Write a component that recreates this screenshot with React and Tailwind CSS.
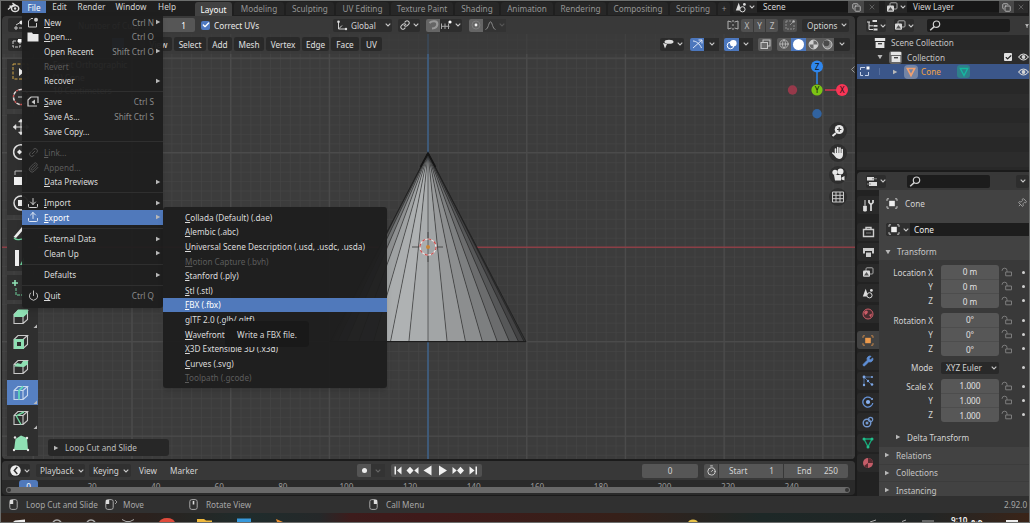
import React from "react";
import {
  Link2, Paperclip, Download, Upload, Power, Copy, X, Globe, Wrench,
  Pin, Timer, Check, Link,
} from "lucide-react";

const Chev = ({ c = "#c8c8c8" }) => (
  <svg width="6" height="4" viewBox="0 0 6 4" className="shrink-0">
    <path d="M0.7 0.7 L3 3 L5.3 0.7" fill="none" stroke={c} strokeWidth="1.1" />
  </svg>
);
const Tri = ({ down }) => (
  <svg width="6" height="6" viewBox="0 0 6 6" className="shrink-0">
    <path d={down ? "M0.5 1 H5.5 L3 5.3 Z" : "M1 0.7 L5.3 3 L1 5.3 Z"} fill="#b8b8b8" />
  </svg>
);

/* ---------- top bar ---------- */
const Logo = () => (
  <svg width="13" height="11" viewBox="0 0 13 11">
    <path d="M1 7.6 L6.8 2.4 M2.4 4.2 H7.5 M5.4 0.9 L9.6 4" stroke="#dedede" strokeWidth="1.3" fill="none" />
    <ellipse cx="8.1" cy="6.5" rx="3.6" ry="3.1" fill="none" stroke="#dedede" strokeWidth="1.5" />
    <circle cx="8.1" cy="6.5" r="1.2" fill="#dedede" />
  </svg>
);
const SceneIcon = () => (
  <svg width="12" height="11" viewBox="0 0 12 11">
    <path d="M3.7 0.8 L6.3 8.5 H0.8 Z" fill="#dcdcdc" />
    <circle cx="7.5" cy="7.3" r="2.6" fill="#2a2a2a" stroke="#dcdcdc" />
    <circle cx="9.4" cy="2.4" r="1.4" fill="#dcdcdc" />
  </svg>
);
const LayersIcon = () => (
  <svg width="12" height="11" viewBox="0 0 12 11">
    <rect x="4" y="0.8" width="7" height="6.2" rx="1" fill="none" stroke="#a8a8a8" />
    <rect x="1" y="3.4" width="7" height="6.4" rx="1" fill="#d8d8d8" />
    <path d="M2 8.6 L4.5 5 L7 8.6 Z" fill="#555" />
  </svg>
);
const Tab = ({ w, children }) => (
  <div className={`${w} flex h-[13px] shrink-0 items-center justify-center rounded-t-[3px] bg-[#272727] text-[#949494]`}>{children}</div>
);

const TopBar = () => (
  <div className="flex h-[15px] shrink-0 items-start bg-[#1f1f1f]">
    <div className="ml-[6px] mt-[1px] w-[15px] shrink-0"><Logo /></div>
    <div className="flex h-[12px] w-[24px] items-center justify-center bg-[#5079bb] text-white">File</div>
    <div className="flex h-[11px] w-[27px] items-center justify-center">Edit</div>
    <div className="flex h-[11px] w-[37px] items-center justify-center">Render</div>
    <div className="flex h-[11px] w-[42px] items-center justify-center">Window</div>
    <div className="flex h-[11px] w-[30px] items-center justify-center">Help</div>
    <div className="ml-[13px] mt-[1px] flex shrink-0 gap-[2px]">
      <div className="flex h-[14px] w-[37px] items-center justify-center rounded-t-[3px] bg-[#424242] text-white">Layout</div>
      <Tab w="w-[50px]">Modeling</Tab>
      <Tab w="w-[48px]">Sculpting</Tab>
      <Tab w="w-[53px]">UV Editing</Tab>
      <Tab w="w-[62px]">Texture Paint</Tab>
      <Tab w="w-[44px]">Shading</Tab>
      <Tab w="w-[52px]">Animation</Tab>
      <Tab w="w-[51px]">Rendering</Tab>
      <Tab w="w-[60px]">Compositing</Tab>
      <Tab w="w-[46px]">Scripting</Tab>
      <Tab w="w-[12px]">+</Tab>
    </div>
    <div className="ml-[3px] flex h-[12px] w-[24px] shrink-0 items-center justify-center gap-[2px] rounded-bl-[3px] bg-[#272727]"><SceneIcon /><Chev /></div>
    <div className="flex h-[11px] w-[91px] shrink-0 items-center bg-[#171717] pl-[6px]">Scene</div>
    <div className="flex h-[12px] w-[16px] shrink-0 items-center justify-center bg-[#484848]"><Copy size={9} color="#d0d0d0" /></div>
    <div className="flex h-[12px] w-[15px] shrink-0 items-center justify-center bg-[#2b2b2b]"><X size={8} color="#777" /></div>
    <div className="ml-[6px] flex h-[12px] w-[22px] shrink-0 items-center justify-center gap-[2px] bg-[#272727]"><LayersIcon /><Chev /></div>
    <div className="flex h-[11px] w-[92px] shrink-0 items-center bg-[#171717] pl-[6px]">View Layer</div>
    <div className="flex h-[12px] w-[15px] shrink-0 items-center justify-center bg-[#484848]"><Copy size={9} color="#d0d0d0" /></div>
    <div className="flex h-[12px] w-[14px] shrink-0 items-center justify-center bg-[#2b2b2b]"><X size={8} color="#777" /></div>
  </div>
);

/* ---------- viewport ---------- */
const ToolHeader = () => (
  <div className="flex h-[18px] shrink-0 items-center rounded-t-[4px] bg-[#393939]">
    <div className="ml-[6px] flex h-[14px] w-[22px] items-center justify-center rounded-[2px] bg-[#2b2b2b]">
      <svg width="12" height="10" viewBox="0 0 12 10"><path d="M1 8 H5 M3 6 V10 M3 5 L8 2 M6 8 H9" stroke="#ccc" /><circle cx="8.5" cy="2.5" r="2" fill="#eee" /></svg>
    </div>
    <div className="ml-[48px] w-[60px] shrink-0 whitespace-nowrap">Number of Cuts</div>
    <div className="ml-[7px] flex h-[14px] w-[50px] shrink-0 items-center justify-end rounded-r-[2px] bg-[#565656] pr-[9px] text-white">1</div>
    <div className="ml-[6px] flex h-[9px] w-[9px] items-center justify-center rounded-[2px] bg-[#4e78c0]"><Check size={8} strokeWidth={4} color="#fff" /></div>
    <div className="ml-[4px] w-[119px] shrink-0 text-[#e8e8e8]">Correct UVs</div>
    <div className="flex h-[13px] w-[59px] shrink-0 items-center rounded-[2px] bg-[#2d2d2d] pl-[3px]">
      <svg width="12" height="11" viewBox="0 0 12 11"><path d="M2.5 1 V9 H10 M2.5 9 L6 5.5" stroke="#d0d0d0" fill="none" /><circle cx="2.5" cy="1.8" r="1.3" fill="#ddd" /><circle cx="10" cy="9" r="1.2" fill="#ddd" /></svg>
      <span className="ml-[3px] w-[34px]">Global</span><Chev />
    </div>
    <div className="ml-[6px] flex h-[13px] w-[22px] shrink-0 items-center justify-center gap-[3px] rounded-[2px] bg-[#2d2d2d]"><Link size={10} strokeWidth={2.6} color="#c8c8c8" /><Chev /></div>
    <div className="ml-[6px] flex h-[13px] w-[14px] shrink-0 items-center justify-center rounded-l-[2px] bg-[#656565]">
      <svg width="11" height="10" viewBox="0 0 11 10"><path d="M1.5 3 C4 0.5 9.5 0.5 9.3 4.2 C9.2 7.5 6 8.3 4 8.5" fill="none" stroke="#989898" strokeWidth="2.2" /></svg>
    </div>
    <div className="flex h-[13px] w-[22px] shrink-0 items-center justify-center gap-[3px] rounded-r-[2px] bg-[#2d2d2d]">
      <svg width="11" height="10" viewBox="0 0 11 10"><path d="M0.5 3.5 V9 M4 3.5 V9 M7.5 3.5 V9 M0 6.3 H8.5" stroke="#a8a8a8" fill="none" /><circle cx="9" cy="2" r="1.6" fill="#fff" /></svg><Chev />
    </div>
    <div className="ml-[7px] flex h-[13px] w-[14px] shrink-0 items-center justify-center rounded-l-[2px] bg-[#656565]">
      <svg width="10" height="10" viewBox="0 0 10 10"><circle cx="5" cy="5" r="4" fill="none" stroke="#7c7c7c" /><circle cx="5" cy="5" r="1.4" fill="#f2f2f2" /></svg>
    </div>
    <div className="flex h-[13px] w-[23px] shrink-0 items-center justify-center gap-[3px] bg-[#333]">
      <svg width="11" height="9" viewBox="0 0 11 9"><path d="M0.5 8.5 C3.5 8 3.7 0.8 5.5 0.8 S7.5 8 10.5 8.5" stroke="#8a8a8a" fill="none" /></svg><Chev c="#555" />
    </div>
    <div className="ml-[220px] flex h-[13px] w-[14px] shrink-0 items-center justify-center">
      <svg width="12" height="10" viewBox="0 0 12 10"><path d="M4.5 2 L1 1 V9 L4.5 8 M7.5 2 L11 1 V9 L7.5 8 M6 0 V2 M6 4 V6 M6 8 V10" stroke="#b0b0b0" fill="none" /></svg>
    </div>
    <div className="ml-px flex h-[13px] w-[37px] shrink-0 gap-px overflow-hidden rounded-[2px] text-[#bdbdbd]">
      <div className="flex flex-1 items-center justify-center bg-[#505050]">X</div>
      <div className="flex flex-1 items-center justify-center bg-[#505050]">Y</div>
      <div className="flex flex-1 items-center justify-center bg-[#505050]">Z</div>
    </div>
    <div className="ml-[5px] flex h-[13px] w-[14px] shrink-0 items-center justify-center rounded-[2px] bg-[#505050]">
      <svg width="10" height="10" viewBox="0 0 10 10"><path d="M1 1 H6 M1 1 V9 H9 V4" stroke="#8d8d8d" fill="none" strokeDasharray="2 1" /><path d="M5 5 L9 1" stroke="#8d8d8d" /><circle cx="8.6" cy="1.4" r="1.2" fill="#bbb" /></svg>
    </div>
    <div className="ml-[5px] flex h-[13px] w-[47px] shrink-0 items-center gap-[4px] rounded-[2px] bg-[#2d2d2d] pl-[5px]">Options<Chev /></div>
  </div>
);

const Pill = ({ w, children }) => (
  <div className={`${w} flex h-[14px] shrink-0 items-center justify-center rounded-[2px] bg-[#262626]/80 text-[#e0e0e0]`}>{children}</div>
);

const Header = () => (
  <div className="flex h-[20px] shrink-0 items-center bg-[#393939]/60">
    <div className="ml-[6px] flex h-[13px] w-[22px] shrink-0 items-center rounded-[2px] bg-[#2b2b2b] pl-[3px]">
      <svg width="11" height="10" viewBox="0 0 11 10"><path d="M2 2 H9 M2 2 V8 H9 V3" stroke="#ccc" fill="none" strokeDasharray="3 1" /><rect x="7" y="0" width="3.5" height="3.5" fill="#fff" /></svg>
    </div>
    <div className="ml-[82px] h-[12px] w-[12px] shrink-0 bg-[#4f79bc]" />
    <div className="ml-[21px] flex w-[237px] shrink-0 justify-between">
      <Pill w="w-[27px]">View</Pill>
      <Pill w="w-[32px]">Select</Pill>
      <Pill w="w-[24px]">Add</Pill>
      <Pill w="w-[30px]">Mesh</Pill>
      <Pill w="w-[34px]">Vertex</Pill>
      <Pill w="w-[27px]">Edge</Pill>
      <Pill w="w-[28px]">Face</Pill>
      <Pill w="w-[21px]">UV</Pill>
    </div>
    <div className="ml-[278px] flex h-[13px] w-[24px] shrink-0 items-center justify-center gap-[3px] rounded-[2px] bg-[#2b2b2b]">
      <svg width="12" height="10" viewBox="0 0 12 10"><ellipse cx="7" cy="2.8" rx="4.5" ry="2" fill="#ddd" /><path d="M1 4 L5 5 L3 9.5 Z" fill="#ddd" /></svg><Chev />
    </div>
    <div className="ml-[6px] flex h-[13px] w-[14px] shrink-0 items-center justify-center rounded-l-[2px] bg-[#4c77bd]">
      <svg width="11" height="10" viewBox="0 0 11 10"><path d="M1 9 L10 1 M6.5 1 H10 V4.5 M1 2 C4 2 8 5 9.5 9" stroke="#dfe8f8" fill="none" /></svg>
    </div>
    <div className="flex h-[13px] w-[15px] shrink-0 items-center justify-center bg-[#2b2b2b]"><Chev /></div>
    <div className="ml-[5px] flex h-[13px] w-[15px] shrink-0 items-center justify-center rounded-l-[2px] bg-[#4c77bd]">
      <svg width="12" height="11" viewBox="0 0 12 11"><circle cx="4.5" cy="6.5" r="3.3" fill="none" stroke="#fff" /><circle cx="7.3" cy="4.2" r="3.3" fill="#fff" /></svg>
    </div>
    <div className="flex h-[13px] w-[14px] shrink-0 items-center justify-center bg-[#2b2b2b]"><Chev /></div>
    <div className="ml-[5px] flex h-[13px] w-[14px] shrink-0 items-center justify-center rounded-[2px] bg-[#5a5a5a]">
      <svg width="11" height="11" viewBox="0 0 11 11"><rect x="3" y="1" width="7" height="6" fill="none" stroke="#c8c8c8" /><rect x="1" y="3.5" width="6.5" height="6" fill="#6c6c6c" stroke="#c8c8c8" /></svg>
    </div>
    <div className="ml-[5px] flex h-[13px] shrink-0 overflow-hidden rounded-[2px]">
      <div className="flex w-[14px] items-center justify-center bg-[#5a5a5a]"><Globe size={10} color="#bdbdbd" /></div>
      <div className="flex w-[15px] items-center justify-center bg-[#4c77bd]"><div className="h-[11px] w-[11px] rounded-full bg-white" /></div>
      <div className="flex w-[14px] items-center justify-center bg-[#5a5a5a]">
        <svg width="11" height="11" viewBox="0 0 11 11"><circle cx="5.5" cy="5.5" r="4.5" fill="#6a6a6a" stroke="#c6c6c6" /><path d="M5.5 1 A4.5 4.5 0 0 0 1 5.5 H5.5 Z M5.5 5.5 H10 A4.5 4.5 0 0 1 5.5 10 Z" fill="#d0d0d0" /></svg>
      </div>
      <div className="flex w-[14px] items-center justify-center bg-[#5a5a5a]">
        <svg width="11" height="11" viewBox="0 0 11 11"><circle cx="5.5" cy="5.5" r="4.5" fill="#888" stroke="#c6c6c6" /><circle cx="4.3" cy="4.2" r="3" fill="#4a4a4a" /></svg>
      </div>
      <div className="flex w-[16px] items-center justify-center bg-[#2b2b2b]"><Chev /></div>
    </div>
  </div>
);

const CX = 428, APEX = 153, BASE = 341.7, R = 98;
const shades = ["#3c3d3d", "#555656", "#727475", "#8e9091", "#9fa2a3", "#abaeaf", "#afb2b3", "#aaadae", "#a2a5a6", "#989a9b", "#8c8e8f", "#7d7f80", "#6b6c6d", "#565758", "#434344", "#333434"];
const rim = Array.from({ length: 17 }, (_, i) => CX + R * Math.sin(((i - 8) * 11.25 * Math.PI) / 180));

const Scene = () => (
  <svg className="absolute inset-0" width="853" height="425" viewBox="2 34 853 425">
    <defs>
      <pattern id="fine" x="428" y="247.2" width="9.87" height="9.44" patternUnits="userSpaceOnUse">
        <path d="M0 0 H9.87 M0 0 V9.44" stroke="#444444" strokeWidth="1.6" fill="none" />
      </pattern>
    </defs>
    <rect x="2" y="34" width="853" height="425" fill="#3c3c3c" />
    <rect x="2" y="34" width="853" height="425" fill="url(#fine)" />
    {[-4, -3, -2, -1, 1, 2, 3, 4].map((k) => (
      <path key={k} d={`M${428 + k * 98.7} 34 V459`} stroke="#4b4b4b" strokeWidth="1.3" />
    ))}
    {[-2, -1, 1, 2].map((k) => (
      <path key={k} d={`M2 ${247.2 + k * 94.5} H855`} stroke="#4b4b4b" strokeWidth="1.3" />
    ))}
    <path d="M2 247.2 H855" stroke="#8c3f46" strokeWidth="1.4" />
    <path d="M428 34 V459" stroke="#3f5f82" strokeWidth="1.7" />
    {shades.map((c, i) => (
      <path key={i} d={`M${CX} ${APEX} L${rim[i]} ${BASE} L${rim[i + 1]} ${BASE} Z`} fill={c} />
    ))}
    {rim.map((x, i) => (
      <path key={i} d={`M${CX} ${APEX} L${x} ${BASE}`} stroke="#1c1c1c" strokeOpacity={i === 0 || i === 16 ? 1 : 0.7} strokeWidth="0.75" />
    ))}
    <path d={`M${rim[0]} ${BASE} H${rim[16]}`} stroke="#1c1c1c" strokeWidth="1.2" />
    <path d="M420.5 167 L428 153 L435.5 167" fill="none" stroke="#161616" strokeWidth="1.6" />
    <path d="M412 247 H421 M435 247 H443 M428 232 V240 M428 254 V262" stroke="#444" strokeWidth="0.9" />
    <circle cx="428" cy="247" r="8" fill="none" stroke="#f0e6e6" strokeWidth="1.2" />
    <circle cx="428" cy="247" r="8" fill="none" stroke="#c9514f" strokeWidth="1.2" strokeDasharray="3.14 3.14" />
    <circle cx="428" cy="247" r="2" fill="#c88534" />
    <path d="M817 71 V84" stroke="#2f83e3" strokeWidth="1.6" />
    <path d="M825 90 H838" stroke="#d7344f" strokeWidth="1.6" />
    <circle cx="817" cy="66.5" r="6" fill="#2f87ee" />
    <circle cx="792.5" cy="90" r="4.7" fill="#96394a" />
    <circle cx="817" cy="113.7" r="4.7" fill="#3163a0" />
    <circle cx="817" cy="90" r="5.6" fill="#7cc414" />
    <circle cx="842" cy="90" r="6" fill="#f93556" />
    <path d="M854.5 66.5 L851.5 69.5 L854.5 72.5" fill="none" stroke="#999" />
    <g fontFamily="Noto Sans, sans-serif" fontSize="8" textAnchor="middle" fill="#111">
      <text x="817" y="69.5">Z</text><text x="817" y="93">Y</text><text x="842" y="93">X</text>
    </g>
  </svg>
);

const Cube = ({ kind, color = "#c9c9c9" }) => (
  <svg width="18" height="18" viewBox="0 0 18 18">
    <path d="M2 6.5 H11 V15.5 H2 Z M2 6.5 L6 2.5 H15.5 L11 6.5 M15.5 2.5 V11.5 L11 15.5" fill="none" stroke={color} strokeWidth="1.1" />
    {kind === "extrude" && <path d="M2 6.5 L6 1.5 H16 V5 L11.5 9 H2 Z" fill="#8fe0b4" />}
    {kind === "inset" && <path fillRule="evenodd" d="M2 6 H12 V16 H2 Z M5 9 V13 H9 V9 Z" fill="#8fe0b4" />}
    {kind === "bevel" && <path d="M2 8.5 L5 5 L9 6 L11 3 H16 V6 L12 9 Z" fill="#8fe0b4" />}
    {kind === "loop" && <path d="M7 15.5 V6.5 L11 2.5" fill="none" stroke="#5ed6b8" strokeWidth="1.8" />}
    {kind === "knife" && <path d="M4 6.5 L9 15.5 M5 6.5 L12 3" fill="none" stroke="#6fd39d" strokeWidth="1.4" />}
  </svg>
);

const Tool = ({ h, active, corner, children }) => (
  <div className={`${h} relative flex w-full shrink-0 items-center pl-[5px] ${active ? "bg-[#5680c2]" : "bg-[#2f2f2f]"}`}>
    {children}
    {corner && <svg className="absolute right-[1px] bottom-[1px]" width="4" height="4"><path d="M4 0.5 V4 H0.5 Z" fill="#bbb" /></svg>}
  </div>
);

const Toolbar = () => (
  <div className="ml-[5px] flex w-[31px] shrink-0 flex-col">
    <Tool h="h-[25px]"><svg width="18" height="18" viewBox="0 0 18 18"><rect x="1" y="1" width="15" height="15" fill="none" stroke="#d1a648" strokeDasharray="3 1.5" /><path d="M7 5 V13 L12 9 Z" fill="#eee" /></svg></Tool>
    <Tool h="h-[25px]"><svg width="18" height="18" viewBox="0 0 18 18"><circle cx="9" cy="9" r="7.5" fill="none" stroke="#e6dada" strokeWidth="1.5" strokeDasharray="3.5 3" /><circle cx="9" cy="9" r="7.5" fill="none" stroke="#c55" strokeWidth="1.5" strokeDasharray="2 4.5" strokeDashoffset="-4" /><path d="M6 9 H12" stroke="#ccc" /></svg></Tool>
    <div className="h-[5px]" />
    <Tool h="h-[25px]"><svg width="18" height="18" viewBox="0 0 18 18"><path d="M1 9 L4 6.5 V11.5 Z M9 1 L6.5 4 H11.5 Z M9 17 L6.5 14 H11.5 Z M17 9 L14 6.5 V11.5 Z" fill="#e4e4e4" stroke="#e4e4e4" strokeWidth="0.5" /><path d="M4 9 H14 M9 4 V14" stroke="#e4e4e4" /></svg></Tool>
    <Tool h="h-[26px]"><svg width="18" height="18" viewBox="0 0 18 18"><path d="M11 2 A7.3 7.3 0 1 0 11 16" fill="none" stroke="#ddd" strokeWidth="1.5" /><path d="M5 9 L7.5 6.5 L10 9 L7.5 11.5 Z" fill="#eee" /></svg></Tool>
    <Tool h="h-[25px]"><svg width="18" height="18" viewBox="0 0 18 18"><rect x="2" y="8" width="8" height="8" fill="#f2f2f2" /><path d="M3 6 V2 H14 V14 H12" fill="none" stroke="#bbb" /></svg></Tool>
    <Tool h="h-[25px]"><svg width="18" height="18" viewBox="0 0 18 18"><circle cx="9" cy="9" r="7" fill="none" stroke="#ddd" strokeWidth="1.5" /><rect x="6" y="6" width="6" height="6" fill="#eee" /></svg></Tool>
    <div className="h-[5px]" />
    <Tool h="h-[25px]"><svg width="18" height="18" viewBox="0 0 18 18"><path d="M1.5 13 L10 3 L12 5 L4 14 Z" fill="#eee" /><path d="M2 14 C6 18 8 14 13 15" fill="none" stroke="#6fd39d" strokeWidth="1.3" /></svg></Tool>
    <Tool h="h-[26px]"><svg width="18" height="18" viewBox="0 0 18 18"><path d="M3 1 H7 V17 H3 Z" fill="#eee" /><path d="M8 16 L12 8 V16 Z" fill="#6fd39d" /></svg></Tool>
    <div className="h-[4px]" />
    <Tool h="h-[25px]"><svg width="18" height="18" viewBox="0 0 18 18"><path d="M3 1 V7 M0 4 H6" stroke="#8fe0b4" strokeWidth="1.6" /><path d="M4 9 V16 H14" fill="none" stroke="#6fd39d" strokeDasharray="3 1" /></svg></Tool>
    <div className="h-[4px]" />
    <Tool h="h-[25px]" corner><Cube kind="extrude" /></Tool>
    <Tool h="h-[25px]"><Cube kind="inset" /></Tool>
    <Tool h="h-[26px]"><Cube kind="bevel" /></Tool>
    <Tool h="h-[25px]" active corner><Cube kind="loop" color="#c9d8ee" /></Tool>
    <Tool h="h-[25px]" corner><Cube kind="knife" /></Tool>
    <Tool h="h-[26px]"><svg width="18" height="18" viewBox="0 0 18 18"><path d="M2 16 L3.5 5 L9 1.5 L15 4 L16 16 Z" fill="#8fe0b4" /><g fill="#e8e8e8"><circle cx="2" cy="16" r="1.2" /><circle cx="16" cy="16" r="1.2" /><circle cx="3" cy="3.5" r="1.2" /><circle cx="15" cy="4" r="1.2" /></g></svg></Tool>
  </div>
);

const Round = ({ children }) => <div className="flex h-[18px] w-[18px] items-center justify-center rounded-full bg-[#2e2e2e]">{children}</div>;

const Viewport = () => (
  <div className="flex h-[443px] flex-col overflow-hidden rounded-[4px]">
    <ToolHeader />
    <div className="relative flex min-h-0 flex-1 flex-col">
      <Scene />
      <div className="relative flex min-h-0 flex-1 flex-col">
        <Header />
        <div className="flex min-h-0 flex-1 pt-[5px]">
          <Toolbar />
          <div className="ml-[10px] flex flex-col justify-between pb-[3px]">
            <div className="flex flex-col gap-[2px] pl-[5px] text-white"><span>Front Orthographic</span><span>(1) Cone</span><span>10 Centimeters</span></div>
            <div className="flex h-[17px] w-[121px] items-center gap-[6px] rounded-[3px] bg-[#272727] pl-[5px] text-[#bdbdbd]"><Tri />Loop Cut and Slide</div>
          </div>
          <div className="ml-auto flex flex-col gap-[4px] pt-[63px] pr-[8px]">
            <Round><svg width="14" height="14" viewBox="0 0 14 14"><circle cx="8.2" cy="5.5" r="4.5" fill="#e6e6e6" /><path d="M8.2 3.3 V7.7 M6 5.5 H10.4" stroke="#333" strokeWidth="1.2" /><path d="M5 9 L1.5 12" stroke="#e6e6e6" strokeWidth="2" /></svg></Round>
            <Round><svg width="14" height="14" viewBox="0 0 14 14"><path d="M4.5 8 V3 M6.8 7 V1.5 M9 7 V2 M11.2 8 V3.5 M4.5 9.5 L1.8 7" stroke="#e6e6e6" strokeWidth="1.6" strokeLinecap="round" /><path d="M3.7 7 H12 V9 Q11.5 13 8 13 Q5.5 13 3.7 10 Z" fill="#e6e6e6" /></svg></Round>
            <Round><svg width="14" height="14" viewBox="0 0 14 14"><circle cx="4" cy="4.3" r="2.6" fill="#e6e6e6" /><circle cx="9.5" cy="3.6" r="3" fill="#e6e6e6" /><path d="M3 7 H10 V12.5 H4 Z M10.5 9.5 L13.5 8 V12.5 L10.5 11.5 Z" fill="#e6e6e6" /></svg></Round>
            <Round><svg width="14" height="14" viewBox="0 0 14 14"><path d="M1.5 2 H12.5 V12 H1.5 Z M5 2 V12 M9 2 V12 M1.5 5.3 H12.5 M1.5 8.7 H12.5" fill="none" stroke="#c9c9c9" /></svg></Round>
          </div>
        </div>
      </div>
    </div>
  </div>
);

/* ---------- timeline ---------- */
const frames = [20, 40, 60, 80, 100, 120, 140, 160, 180, 200, 220, 240];
const Timeline = () => (
  <div className="mt-[2px] flex h-[34px] flex-col overflow-hidden rounded-[4px] bg-[#2a2a2a]">
    <div className="flex h-[19px] shrink-0 items-center bg-[#383838]">
      <div className="ml-[6px] flex h-[13px] w-[22px] shrink-0 items-center gap-[3px] rounded-[2px] bg-[#2d2d2d] pl-[2px]">
        <svg width="11" height="11" viewBox="0 0 11 11" className="shrink-0"><circle cx="5.5" cy="5.5" r="5.2" fill="#eee" /><path d="M7.3 2 L4.3 5.5 L7.3 9" fill="none" stroke="#333" strokeWidth="1.5" /></svg><Chev />
      </div>
      <div className="ml-[6px] flex h-[13px] w-[49px] items-center justify-between rounded-[2px] bg-[#303030] pr-[1px] pl-[4px]">Playback<Chev /></div>
      <div className="ml-[4px] flex h-[13px] w-[42px] items-center justify-between rounded-[2px] bg-[#303030] pr-[2px] pl-[4px]">Keying<Chev /></div>
      <div className="ml-[8px] w-[31px]">View</div>
      <div className="w-[187px]">Marker</div>
      <div className="flex h-[13px] w-[14px] shrink-0 items-center justify-center rounded-l-[2px] bg-[#545454]"><div className="h-[5px] w-[5px] rounded-full bg-[#eee]" /></div>
      <div className="flex h-[13px] w-[14px] shrink-0 items-center justify-center bg-[#333]"><Chev c="#666" /></div>
      <div className="ml-[6px] flex h-[13px] w-[91px] shrink-0 items-center justify-center rounded-[2px] bg-[#505050]">
        <svg width="89" height="11" viewBox="0 0 89 11">
          <g fill="#f0f0f0">
            <path d="M2.5 1.5 H4 V9.5 H2.5 Z M9.5 1.5 V9.5 L5 5.5 Z" />
            <path d="M18 1.7 L21.5 5.5 L18 9.3 L14.5 5.5 Z M26.5 2 V9 L22.3 5.5 Z" />
            <path d="M39.5 0.5 V10.5 L31.5 5.5 Z" />
            <path d="M47 0.5 V10.5 L55 5.5 Z" />
            <path d="M60.5 2 V9 L64.7 5.5 Z M68.5 1.7 L72 5.5 L68.5 9.3 L65 5.5 Z" />
            <path d="M77.5 1.5 V9.5 L82.5 5.5 Z M83.5 1.5 H85 V9.5 H83.5 Z" />
          </g>
        </svg>
      </div>
      <div className="ml-[160px] flex h-[14px] w-[56px] shrink-0 items-center justify-center rounded-[2px] bg-[#565656]">0</div>
      <div className="ml-[6px] flex h-[14px] w-[144px] shrink-0 gap-px overflow-hidden rounded-[2px]">
        <div className="flex w-[14px] items-center justify-center bg-[#505050]"><Timer size={11} color="#d8d8d8" /></div>
        <div className="flex w-[64px] items-center justify-between bg-[#565656] pr-[9px] pl-[10px]"><span>Start</span><span>1</span></div>
        <div className="flex w-[64px] items-center justify-between bg-[#565656] pr-[10px] pl-[13px]"><span>End</span><span>250</span></div>
      </div>
    </div>
    <div className="flex h-[7px] shrink-0 overflow-hidden pl-[17px] leading-[14px] text-[#999]">
      <div className="h-[7px] w-[19px] shrink-0 rounded-t-[3px] bg-[#5079bb] text-center text-white">0</div>
      <div className="ml-[22.3px] flex shrink-0">
        {frames.map((f) => <div key={f} className="w-[63.6px] shrink-0 text-center">{f}</div>)}
      </div>
    </div>
    <div className="mr-[5px] ml-[4px] flex h-[6px] shrink-0 items-center justify-between rounded-full bg-[#696969] px-[1px]">
      <div className="h-[4px] w-[4px] rounded-full bg-[#333]" /><div className="h-[4px] w-[4px] rounded-full bg-[#333]" />
    </div>
  </div>
);

/* ---------- outliner ---------- */
const ArchiveIcon = () => (
  <svg width="12" height="12" viewBox="0 0 12 12"><path d="M0.8 1 H11.2 V4 H0.8 Z M1.6 5 H10.4 V11 H1.6 Z" fill="#e4e4e4" /><rect x="4" y="6" width="4" height="1.4" fill="#444" /></svg>
);
const EyeIcon = () => (
  <svg width="11" height="8" viewBox="0 0 11 8" className="shrink-0"><path d="M0.6 4 Q5.5 -2 10.4 4 Q5.5 10 0.6 4 Z" fill="none" stroke="#d4d4d4" strokeWidth="1.1" /><circle cx="5.5" cy="4" r="1.9" fill="#d4d4d4" /></svg>
);
const SearchBox = ({ w }) => (
  <div className={`${w} flex h-[13px] shrink-0 items-center rounded-[2px] bg-[#1c1c1c] pl-[2px]`}>
    <svg width="12" height="11" viewBox="0 0 12 11"><circle cx="7.5" cy="4.2" r="3.2" fill="none" stroke="#d0d0d0" strokeWidth="1.2" /><path d="M5.2 6.6 L1.2 10.2" stroke="#d0d0d0" strokeWidth="1.5" /></svg>
  </div>
);
const Outliner = () => (
  <div className="flex h-[154px] shrink-0 flex-col overflow-hidden rounded-tl-[4px] bg-[#282828]">
    <div className="flex h-[19px] shrink-0 items-center bg-[#383838]">
      <div className="ml-[9px] flex h-[13px] w-[21px] items-center justify-center gap-[2px] rounded-[2px] bg-[#2d2d2d]">
        <svg width="12" height="11" viewBox="0 0 12 11"><path d="M1 2 H4 M3 2 V9.5 H7 M3 5.8 H7" stroke="#ddd" fill="none" /><path d="M6.5 1 H11 M7.5 5.8 H11.5 M7.5 9.5 H11.5" stroke="#ddd" strokeWidth="1.8" /></svg><Chev />
      </div>
      <div className="ml-[8px] flex h-[13px] w-[21px] items-center justify-center gap-[2px] rounded-[2px] bg-[#2d2d2d]"><LayersIcon /><Chev /></div>
      <div className="ml-[13px]"><SearchBox w="w-[83px]" /></div>
      <svg className="ml-[15px]" width="8" height="10" viewBox="0 0 8 10"><path d="M0 1.5 H8 L5 5 V9 L3 8 V5 Z" fill="#ccc" /></svg>
    </div>
    <div className="flex h-[15px] shrink-0 items-center gap-[5px] pl-[17px] text-[#c4c4c4]"><ArchiveIcon />Scene Collection</div>
    <div className="flex h-[14px] shrink-0 items-center bg-[#2c2c2c] pl-[20px] text-[#c4c4c4]">
      <Tri down /><div className="ml-[6px] flex h-[13px] w-[13px] items-center justify-center rounded-[3px] bg-[#666]"><ArchiveIcon /></div>
      <span className="ml-[5px] flex-1">Collection</span>
      <div className="mr-[6px] flex h-[8px] w-[8px] items-center justify-center rounded-[1px] bg-[#e2e2e2]"><Check size={7} strokeWidth={4} color="#222" /></div><EyeIcon />
    </div>
    <div className="flex h-[15px] shrink-0 items-center bg-[#3b5689] pl-[2px] text-[#f0a344]">
      <svg width="11" height="11" viewBox="0 0 11 11"><path d="M1.5 4 V1.5 H6 M1.5 6 V9.5 H4 M6 9.5 H9.5 V6" stroke="#c6d2e8" fill="none" /><rect x="7.5" y="0.5" width="3" height="3" fill="#fff" /></svg>
      <div className="mr-[12px] ml-[9px] h-[7px] w-px bg-[#566f9d]" /><Tri />
      <div className="ml-[6px] flex h-[14px] w-[14px] items-center justify-center rounded-[4px] bg-[#7384a5]"><svg width="10" height="10" viewBox="0 0 10 10"><path d="M1.3 1.5 H8.7 L5 8.5 Z" fill="none" stroke="#f0a070" strokeWidth="1.7" /></svg></div>
      <span className="ml-[3px] w-[36px]">Cone</span>
      <div className="flex h-[13px] w-[13px] items-center justify-center rounded-[3px] bg-[#2f7f8a]"><svg width="10" height="10" viewBox="0 0 10 10"><path d="M1.3 1.5 H8.7 L5 8.5 Z" fill="none" stroke="#14b8a0" strokeWidth="1.4" /></svg></div>
      <div className="ml-auto"><EyeIcon /></div>
    </div>
    {["bg-[#282828]", "bg-[#2c2c2c]", "bg-[#282828]", "bg-[#2c2c2c]", "bg-[#282828]", "bg-[#2c2c2c]", "bg-[#282828]"].map((c, i) => <div key={i} className={`h-[14.6px] shrink-0 ${c}`} />)}
  </div>
);

/* ---------- properties ---------- */
const PTab = ({ h = "h-[20.5px]", active, children }) => (
  <div className={`${h} flex w-full shrink-0 items-center justify-center`}>
    <div className={`flex h-[18px] w-full items-center justify-center rounded-l-[3px] ${active ? "bg-[#424242]" : "bg-[#292929]"}`}>{children}</div>
  </div>
);
const Field = ({ children, last }) => (
  <div className={`flex flex-1 items-center justify-center bg-[#575757] text-[#e2e2e2] ${last ? "" : "border-b border-[#4d4d4d]"}`}>{children}</div>
);
const Lock = () => (
  <div className="flex flex-1 items-center">
    <svg width="12" height="10" viewBox="0 0 12 10"><path d="M4.7 5 H10.5 V8.8 H4.7 Z M6 5 V3.5 Q6 1.2 3.7 1.2 Q1 1.2 1 3.8" fill="none" stroke="#7d7d7d" /></svg>
    <div className="ml-[9px] h-[3px] w-[3px] rounded-full bg-[#d0d0d0]" />
  </div>
);
const Group = ({ labels, values }) => (
  <div className="flex h-[43px] shrink-0">
    <div className="flex w-[54px] flex-col text-right">{labels.map((l) => <div key={l} className="flex flex-1 items-center justify-end whitespace-nowrap">{l}</div>)}</div>
    <div className="ml-[8px] flex w-[58px] flex-col overflow-hidden rounded-[3px]">{values.map((v, i) => <Field key={i} last={i === 2}>{v}</Field>)}</div>
    <div className="ml-[2px] flex flex-col"><Lock /><Lock /><Lock /></div>
  </div>
);
const Section = ({ children }) => (
  <div className="flex h-[17.5px] shrink-0 items-center gap-[6px] border-b border-[#3c3c3c] pl-[5px] text-[#c4c4c4]"><Tri />{children}</div>
);
const ObjIcon = ({ c = "#eee" }) => (
  <svg width="12" height="11" viewBox="0 0 12 11"><rect x="3.2" y="2.8" width="5.6" height="5.4" fill={c} /><path d="M1 3 V0.8 H3 M9 0.8 H11 V3 M11 8 V10.2 H9 M3 10.2 H1 V8" fill="none" stroke={c} strokeOpacity="0.7" /></svg>
);

const Properties = () => (
  <div className="mt-[2px] flex h-[324px] flex-col overflow-hidden rounded-tl-[4px] bg-[#222]">
    <div className="flex h-[18px] shrink-0 items-center bg-[#383838]">
      <div className="ml-[9px] flex h-[13px] w-[21px] items-center justify-center gap-[2px] rounded-[2px] bg-[#2d2d2d]">
        <svg width="12" height="11" viewBox="0 0 12 11"><path d="M1 1 H8 V4.5 H1 Z M3 6 H11 V10 H3 Z" fill="#ddd" /><path d="M6 2.8 H11 M1 8 H5" stroke="#888" /></svg><Chev />
      </div>
      <div className="ml-[21px]"><SearchBox w="w-[83px]" /></div>
      <div className="ml-[26px] flex h-[13px] w-[13px] items-center justify-center rounded-[2px] bg-[#2d2d2d]"><Chev /></div>
    </div>
    <div className="flex min-h-0 flex-1">
      <div className="flex w-[22px] shrink-0 flex-col pt-[5px]">
        <PTab><svg width="13" height="13" viewBox="0 0 13 13"><path d="M3 1 V6 M1.7 7 H4.3 V12 H1.7 Z" stroke="#ddd" fill="#ddd" /><path d="M7 1 V3.5 L9 5.5 L11 3.5 V1 M9 5 V12" fill="none" stroke="#ddd" strokeWidth="1.7" /></svg></PTab>
        <div className="h-[6px] shrink-0" />
        <PTab><svg width="13" height="12" viewBox="0 0 13 12"><path d="M1.5 3.5 H11.5 V10.5 H1.5 Z M4 3 V1.5 H9 V3" fill="none" stroke="#ccc" strokeWidth="1.4" /><path d="M4 7 H9" stroke="#777" /></svg></PTab>
        <PTab><svg width="13" height="12" viewBox="0 0 13 12"><path d="M1 2 H12 V7.5 H10 V5 H3 V7.5 H1 Z M4 6.5 H9 V11 H4 Z" fill="#ccc" /></svg></PTab>
        <PTab><LayersIcon /></PTab>
        <PTab><SceneIcon /></PTab>
        <PTab><svg width="12" height="12" viewBox="0 0 12 12"><circle cx="6" cy="6" r="5" fill="#4a2c30" stroke="#cc5c67" /><path d="M2 4 Q5 1 6 4 Q5 7 3 7 Z M7 7 L10 5.5 L9 9.5 Z" fill="#cc5c67" /></svg></PTab>
        <div className="h-[6px] shrink-0" />
        <PTab active><ObjIcon c="#ed9a4b" /></PTab>
        <PTab><Wrench size={12} color="#5f8fd6" fill="#5f8fd6" strokeWidth={1.5} /></PTab>
        <PTab><svg width="12" height="12" viewBox="0 0 12 12"><path d="M2 2 L10 2 M2 2 L9 9 M2 2 V10" stroke="#51709f" fill="none" /><g fill="#7da7e6"><circle cx="2" cy="2" r="1.4" /><circle cx="10" cy="2" r="1" /><circle cx="6" cy="6" r="1.2" /><circle cx="10" cy="9.5" r="1.3" /><circle cx="2" cy="10" r="1.2" /></g></svg></PTab>
        <PTab><svg width="12" height="12" viewBox="0 0 12 12"><path d="M9 2.2 A5 5 0 1 0 10.8 7" fill="none" stroke="#6794d8" strokeWidth="1.3" /><circle cx="6" cy="6" r="2.1" fill="#8ab2f0" /><circle cx="10" cy="3" r="1" fill="#8ab2f0" /></svg></PTab>
        <PTab><svg width="12" height="12" viewBox="0 0 12 12"><circle cx="5" cy="7" r="3.8" fill="none" stroke="#7398d0" strokeWidth="1.4" /><circle cx="5" cy="7" r="1.5" fill="#7398d0" /><circle cx="8.5" cy="3.5" r="2.2" fill="none" stroke="#7398d0" strokeWidth="1.2" /></svg></PTab>
        <PTab><svg width="12" height="12" viewBox="0 0 12 12"><path d="M2 2 H10 L6 9.8 Z" fill="none" stroke="#17a678" strokeWidth="1.4" /><g fill="#22c08c"><circle cx="2" cy="2" r="1.5" /><circle cx="10" cy="2" r="1.5" /><circle cx="6" cy="10" r="1.5" /></g></svg></PTab>
        <PTab><svg width="12" height="12" viewBox="0 0 12 12"><circle cx="6" cy="6" r="5" fill="#c45d68" /><path d="M6 1 A5 5 0 0 1 11 6 H6 Z M6 6 V11 A5 5 0 0 1 2 9 Z" fill="#5a2c32" /></svg></PTab>
      </div>
      <div className="flex min-w-0 flex-1 flex-col bg-[#424242]">
        <div className="flex h-[26px] shrink-0 items-center pl-[7px]">
          <ObjIcon /><span className="ml-[7px] flex-1">Cone</span><Pin size={10} color="#aaa" className="mr-[2px] rotate-45" />
        </div>
        <div className="mt-[7px] ml-[7px] flex h-[13px] shrink-0 overflow-hidden rounded-l-[3px] bg-[#1d1d1d]">
          <div className="flex w-[24px] items-center justify-center gap-[3px] bg-[#2f2f2f]"><ObjIcon /><Chev /></div>
          <div className="flex flex-1 items-center pl-[4px] text-[#ededed]">Cone</div>
        </div>
        <div className="mt-[7px] flex h-[17px] shrink-0 items-center gap-[6px] pl-[6px] text-[#c8c8c8]"><Tri down />Transform</div>
        <div className="flex h-[187px] shrink-0 flex-col bg-[#393939] pt-[5px]">
          <Group labels={["Location X", "Y", "Z"]} values={["0 m", "0 m", "0 m"]} />
          <div className="h-[5px] shrink-0" />
          <Group labels={["Rotation X", "Y", "Z"]} values={["0°", "0°", "0°"]} />
          <div className="my-[5px] flex h-[13px] shrink-0 items-center">
            <div className="w-[54px] text-right">Mode</div>
            <div className="ml-[8px] flex h-[12px] w-[58px] items-center justify-between rounded-[2px] bg-[#292929] pr-[2px] pl-[5px] whitespace-nowrap">XYZ Euler<Chev /></div>
            <div className="ml-[23px] h-[3px] w-[3px] rounded-full bg-[#d0d0d0]" />
          </div>
          <Group labels={["Scale X", "Y", "Z"]} values={["1.000", "1.000", "1.000"]} />
          <div className="mt-[7px] flex h-[16px] items-center gap-[6px] pl-[16px]"><Tri />Delta Transform</div>
        </div>
        <Section>Relations</Section>
        <Section>Collections</Section>
        <Section>Instancing</Section>
      </div>
    </div>
  </div>
);

/* ---------- status + task bar ---------- */
const Mouse = ({ side }) => (
  <svg width="9" height="11" viewBox="0 0 9 11" className="shrink-0">
    <rect x="0.8" y="0.6" width="7.4" height="9.8" rx="2" fill="none" stroke="#a8a8a8" />
    {side === "l" && <path d="M1 1 H4.2 V5 H1 Z" fill="#ddd" />}
    {side === "m" && <path d="M3.7 2 H5.3 V5.5 H3.7 Z" fill="#ddd" />}
    {side === "r" && <path d="M4.8 1 H8 V5 H4.8 Z" fill="#ddd" />}
  </svg>
);
const StatusBar = () => (
  <div className="flex h-[17px] shrink-0 items-center bg-[#303030] pl-[8px] text-[#a6a6a6]">
    <Mouse side="l" /><span className="ml-[8px] w-[79px]">Loop Cut and Slide</span>
    <Mouse side="l" /><svg width="4" height="11" viewBox="0 0 4 11"><path d="M1 1 L3 3 L1 5" stroke="#999" fill="none" /></svg><span className="ml-[5px] w-[66px]">Move</span>
    <Mouse side="m" /><span className="ml-[8px] w-[163px]">Rotate View</span>
    <Mouse side="r" /><span className="ml-[8px]">Call Menu</span>
    <span className="ml-auto w-[25px] overflow-hidden whitespace-nowrap">2.92.0</span>
  </div>
);
const TaskBar = () => (
  <div className="flex flex-1 items-end overflow-hidden bg-[#241c1a]">
    <svg width="1028" height="9" viewBox="1 513 1028 9">
      <defs>
        <linearGradient id="desk" x1="0" x2="1" y1="0" y2="0">
          <stop offset="0" stopColor="#32241c" /><stop offset="0.14" stopColor="#2b211d" /><stop offset="0.24" stopColor="#1f2c2c" />
          <stop offset="0.31" stopColor="#252829" /><stop offset="0.34" stopColor="#3d1c1c" /><stop offset="0.41" stopColor="#3f1a1a" />
          <stop offset="0.6" stopColor="#362019" /><stop offset="0.74" stopColor="#1d2827" /><stop offset="0.9" stopColor="#222525" /><stop offset="1" stopColor="#3a2418" />
        </linearGradient>
      </defs>
      <rect x="1" y="513" width="1028" height="9" fill="url(#desk)" />
      <path d="M13 522 L15 520.5 L25 519.5 V522 Z" fill="#eee" />
      <path d="M53 522 Q57 518 61 522 M87 522 Q91 518 95 522" stroke="#aaa" fill="none" strokeWidth="1.5" />
      <path d="M122 519.5 L126 521.5 H130 L134 519.5" stroke="#aaa" fill="none" />
      <ellipse cx="167" cy="523" rx="8" ry="5" fill="#e04b3c" />
      <path d="M197 519 H204 L206 520.5 H212 V522 H197 Z" fill="#f0b93c" />
      <rect x="237" y="518.5" width="14" height="4" fill="#3799dc" />
      <path d="M276 519 L283 522 H277 Z" fill="#ed9131" />
      <ellipse cx="693" cy="523" rx="5" ry="3.5" fill="#e8c34a" />
      <path d="M870 522 L876 520 M902 521.5 L906 520 M922 521 H934" stroke="#aaa" />
      <rect x="1006" y="520" width="12" height="3" fill="#eee" />
      <text x="951" y="522.5" fontSize="8.2" fontWeight="600" fill="#f0f0f0" fontFamily="Noto Sans, DejaVu Sans, sans-serif">9:10 ه.م</text>
    </svg>
  </div>
);

/* ---------- menus ---------- */
const fileMenu = [
  [["N", "ew", "Ctrl N", true, <svg width="12" height="11" viewBox="0 0 12 11"><path d="M6 1.5 H4 L1.5 4 V10 H9.5 V6" fill="none" stroke="#ccc" /><circle cx="9" cy="2.7" r="2" fill="#ccc" /></svg>],
   ["O", "pen...", "Ctrl O", false, <svg width="12" height="10" viewBox="0 0 12 10"><path d="M0.5 0.5 H5 L6 2 H11.5 V9.5 H0.5 Z" fill="#e8e8e8" /></svg>],
   ["", "Open Recent", "Shift Ctrl O", true], ["", "Revert", "", false, null, true], ["", "Recover", "", true]],
  [["S", "ave", "Ctrl S", false, <svg width="12" height="11" viewBox="0 0 12 11"><path d="M4 1 H11 V7 M4 1 L1 4 V10 H10" fill="none" stroke="#ccc" strokeWidth="1.2" /><path d="M8 3.5 V8.5 L4.5 6 Z" fill="#ccc" /></svg>],
   ["", "Save As...", "Shift Ctrl S"], ["", "Save Copy..."]],
  [["L", "ink...", "", false, <Link2 size={11} color="#555" className="-rotate-45" />, true], ["", "Append...", "", false, <Paperclip size={11} color="#555" />, true], ["D", "ata Previews", "", true]],
  [["I", "mport", "", true, <Download size={12} color="#d0d0d0" />], ["E", "xport", "", true, <Upload size={12} color="#e0e8f4" />, false, true]],
  [["", "External Data", "", true], ["", "Clean Up", "", true]],
  [["", "Defaults", "", true]],
  [["Q", "uit", "Ctrl Q", false, <Power size={11} color="#d0d0d0" />]],
];
const FileMenu = () => (
  <div className="absolute top-[12px] left-[21px] z-10 flex h-[295px] w-[141px] flex-col rounded-b-[3px] bg-[#1e1e1e]/96 pt-[2px] shadow-md">
    {fileMenu.map((group, g) => (
      <div key={g} className={g ? "mt-[3px] border-t border-[#2f2f2f] pt-[2.7px]" : ""}>
        {group.map(([u, label, key, sub, icon, off, on], i) => (
          <div key={i} className={`flex h-[14.6px] items-center pr-[2px] ${on ? "bg-[#5079bb] text-white" : off ? "text-[#5c5c5c]" : "text-[#dcdcdc]"}`}>
            <div className="flex w-[22px] shrink-0 items-center justify-center">{icon}</div>
            <div className="flex-1 whitespace-nowrap"><span className="underline">{u}</span>{label}</div>
            <span className="mr-[1px] whitespace-nowrap text-[#8a8a8a]">{key}</span>
            <div className="flex w-[6px] shrink-0">{sub && <Tri />}</div>
          </div>
        ))}
      </div>
    ))}
  </div>
);
const exportItems = ["Collada (Default) (.dae)", "Alembic (.abc)", "Universal Scene Description (.usd, .usdc, .usda)", "Motion Capture (.bvh)", "Stanford (.ply)", "Stl (.stl)", "FBX (.fbx)", "glTF 2.0 (.glb/.gltf)", "Wavefront (.obj)", "X3D Extensible 3D (.x3d)", "Curves (.svg)", "Toolpath (.gcode)"];
const ExportMenu = () => (
  <div className="absolute top-[206px] left-[162px] z-10 flex h-[181px] w-[224px] flex-col rounded-[3px] bg-[#1e1e1e]/96 pt-[3px] shadow-md">
    {exportItems.map((t, i) => (
      <div key={t} className={`flex h-[14.6px] shrink-0 items-center pl-[22px] whitespace-nowrap ${i === 6 ? "bg-[#5079bb] text-white" : i === 3 || i === 11 ? "text-[#5c5c5c]" : "text-[#dcdcdc]"}`}>
        <span><span className="underline">{t[0]}</span>{t.slice(1)}</span>
      </div>
    ))}
    <div className="absolute top-[114px] left-[62px] flex h-[26px] w-[84px] items-center justify-center rounded-[4px] bg-[#191919] text-[#d8d8d8]">Write a FBX file.</div>
  </div>
);

export default function App() {
  return (
    <div className="relative flex h-[523px] w-[1030px] flex-col overflow-hidden border border-[#6c6e6d] bg-[#1b1b1b] font-['Noto_Sans',sans-serif] text-[8.2px] leading-[11px] text-[#d4d4d4]">
      <TopBar />
      <div className="flex h-[480px] shrink-0">
        <div className="ml-px w-[853px] shrink-0"><Viewport /><Timeline /></div>
        <div className="ml-[2px] flex min-w-0 flex-1 flex-col"><Outliner /><Properties /></div>
      </div>
      <StatusBar />
      <TaskBar />
      <FileMenu />
      <ExportMenu />
    </div>
  );
}
